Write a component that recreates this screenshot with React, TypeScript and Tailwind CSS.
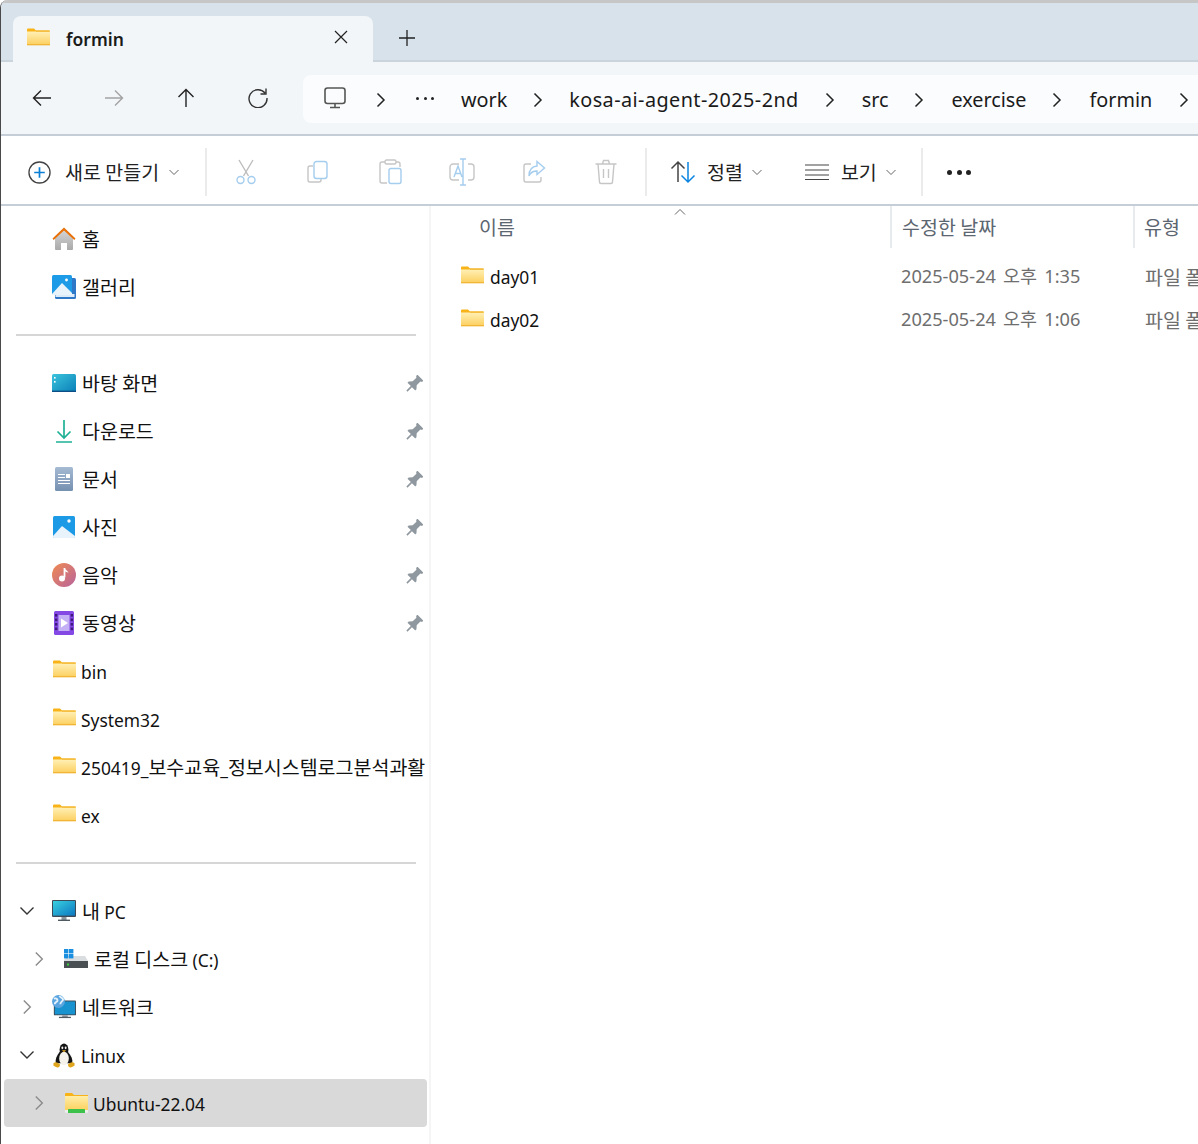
import type { ReactNode } from "react";

const FONT = "font-['Noto_Sans_CJK_KR','Noto_Sans',sans-serif]";

/** Latin runs sit a bit smaller than the hangul next to them, like Segoe beside Malgun. */
function Lat({ children, flush }: { children: ReactNode; flush?: boolean }) {
  return <span className={`font-['Noto_Sans',sans-serif] text-[17.4px] ${flush ? "-ml-px" : ""}`}>{children}</span>;
}

function FolderIcon({ id, className = "" }: { id: string; className?: string }) {
  return (
    <svg viewBox="0 0 24 20" className={`h-5 w-6 ${className}`}>
      <defs>
        <linearGradient id={id} x1="0" y1="0" x2="0" y2="1">
          <stop offset="0" stopColor="#fff0b5" />
          <stop offset="1" stopColor="#fccf5f" />
        </linearGradient>
      </defs>
      <path d="M1 2.500a1 1 0 0 1 1-1h6l2 2h13v2H1z" fill="#f8b318" />
      <rect x="1" y="4.500" width="23" height="13.500" fill={`url(#${id})`} />
      <rect x="1" y="17.200" width="23" height="1.100" fill="#efb02c" />
      <rect x="10" y="3.500" width="14" height="1.200" fill="#f3b733" />
    </svg>
  );
}

function PinIcon() {
  return (
    <svg viewBox="0 0 18 18" className="h-[18px] w-[18px]">
      <path
        transform="rotate(45 9 9)"
        d="M4.800 0h8.400v1.800l-1.400 1v5.200l2.700 3v1.700H9.800V19H8.200v-6.300H3.500V11l2.700-3V2.800l-1.400-1z"
        fill="#8f989f"
      />
    </svg>
  );
}

function Chevron({ open = false, dark = false }: { open?: boolean; dark?: boolean }) {
  return (
    <svg viewBox="0 0 16 16" className="h-4 w-4" fill="none" stroke={dark ? "#333" : "#8b8b8b"} strokeWidth="1.400">
      {open ? <path d="M1.500 4.500 8 11l6.500-6.500" /> : <path d="M4.800 1.500 11.300 8l-6.500 6.500" />}
    </svg>
  );
}

function SmallCaret() {
  return (
    <svg viewBox="0 0 12 12" className="h-3 w-3" fill="none" stroke="#666" strokeWidth="1">
      <path d="M1.500 4 6 8.500 10.500 4" />
    </svg>
  );
}

function PathChevron() {
  return (
    <svg viewBox="0 0 12 16" className="h-4 w-3 shrink-0" fill="none" stroke="#222" strokeWidth="1.500">
      <path d="M2.500 1.500 9 8l-6.500 6.500" />
    </svg>
  );
}

const Home = () => (
  <svg viewBox="0 0 24 24" className="h-6 w-6">
    <defs>
      <linearGradient id="hm" x1="0" y1="0" x2="0" y2="1">
        <stop offset="0" stopColor="#d5d5d5" />
        <stop offset="1" stopColor="#a9a9a9" />
      </linearGradient>
    </defs>
    <path d="M3 11 12 3l9 8v11a1 1 0 0 1-1 1h-5v-7H9v7H4a1 1 0 0 1-1-1z" fill="url(#hm)" />
    <path d="M0.500 11.500 12 0.500l11.500 11-1.200 1.400L12 3.400 1.700 12.900z" fill="#e8710a" />
  </svg>
);

const Gallery = () => (
  <svg viewBox="0 0 24 24" className="h-6 w-6">
    <rect x="3" y="3" width="21" height="21" rx="1.500" fill="#2f78c8" />
    <rect x="3.500" y="19" width="19" height="3" fill="#dcebf7" />
    <rect x="0" y="0" width="20" height="20" rx="1.500" fill="#1d9be6" />
    <path d="M0 19 10 8l10 10v2H0z" fill="#e8f3fb" />
    <circle cx="14.500" cy="5" r="1.400" fill="#fff" />
  </svg>
);

const Desktop = () => (
  <svg viewBox="0 0 24 18" className="h-[18px] w-6">
    <defs>
      <linearGradient id="dk" x1="0" y1="0" x2="1" y2="1">
        <stop offset="0" stopColor="#3bc4dc" />
        <stop offset="1" stopColor="#0a7fb8" />
      </linearGradient>
    </defs>
    <rect width="24" height="18" rx="1.500" fill="url(#dk)" />
    <rect x="2" y="3" width="1.600" height="1.600" fill="#fff" />
    <rect x="2" y="7" width="1.600" height="1.600" fill="#fff" />
    <rect y="16.600" width="24" height="1.400" fill="#0b4f86" />
  </svg>
);

const Download = () => (
  <svg viewBox="0 0 24 24" className="h-6 w-6" fill="none" stroke="#1fb195" strokeWidth="1.700">
    <path d="M12 1v18M5.500 12.500 12 19l6.500-6.500M4 23h16" />
  </svg>
);

const Docs = () => (
  <svg viewBox="0 0 24 24" className="h-6 w-6">
    <defs>
      <linearGradient id="dc" x1="0" y1="0" x2="0" y2="1">
        <stop offset="0" stopColor="#a5bad3" />
        <stop offset="1" stopColor="#7590b0" />
      </linearGradient>
    </defs>
    <rect x="3" y="0" width="18" height="24" rx="1.500" fill="url(#dc)" />
    <path d="M6 7.500h7M6 10.500h7M6 13.500h12M6 16.500h12" stroke="#fff" strokeWidth="1" />
    <rect x="14" y="7" width="4" height="4" fill="#fff" />
  </svg>
);

const Photo = () => (
  <svg viewBox="0 0 24 24" className="h-6 w-6">
    <rect x="1" y="1" width="22" height="22" rx="1.500" fill="#1c9ae6" />
    <path d="M1 21 10 11l13 10v1a1 1 0 0 1-1 1H2a1 1 0 0 1-1-1z" fill="#e8f3fb" />
    <circle cx="17" cy="6" r="1.700" fill="#fff" />
  </svg>
);

const Music = () => (
  <svg viewBox="0 0 24 24" className="h-6 w-6">
    <defs>
      <linearGradient id="ms" x1="0" y1="0" x2="1" y2="1">
        <stop offset="0" stopColor="#f08a50" />
        <stop offset="1" stopColor="#b8649e" />
      </linearGradient>
    </defs>
    <circle cx="12" cy="12" r="12" fill="url(#ms)" />
    <path d="M12.500 5v9.500" stroke="#fff" strokeWidth="1.800" />
    <path d="M12.500 5c.5 2 3.500 2.500 4 5-1.500-1-3-1.500-4-1.500z" fill="#fff" />
    <circle cx="10" cy="15.500" r="3" fill="#fff" />
  </svg>
);

const Video = () => (
  <svg viewBox="0 0 24 24" className="h-6 w-6">
    <rect x="2" y="0" width="20" height="24" rx="1.500" fill="#8448e4" />
    <rect x="6.500" y="4" width="11" height="16" fill="#c3b0f5" />
    <path d="M9 7.500v9l7-4.500z" fill="#fff" />
    {[3, 7.500, 12, 16.500].map((y) => (
      <g key={y} fill="#3d1c7c">
        <rect x="3" y={y} width="2.400" height="2.600" />
        <rect x="18.600" y={y} width="2.400" height="2.600" />
      </g>
    ))}
  </svg>
);

const Pc = () => (
  <svg viewBox="0 0 24 22" className="h-[22px] w-6">
    <defs>
      <linearGradient id="pc" x1="0" y1="0" x2="1" y2="1">
        <stop offset="0" stopColor="#38d0e0" />
        <stop offset="1" stopColor="#0d77c0" />
      </linearGradient>
    </defs>
    <rect x="0" y="0" width="24" height="17" rx="1" fill="#3e4a55" />
    <rect x="1" y="1" width="22" height="14.600" fill="url(#pc)" />
    <rect x="9.500" y="17" width="5" height="3" fill="#8a949c" />
    <rect x="6" y="19.600" width="12" height="1.400" fill="#4f5a62" />
  </svg>
);

const Disk = () => (
  <svg viewBox="0 0 24 20" className="h-5 w-6">
    <path d="M0 11 3 7h18l3 5v3H0z" fill="#d9dde0" />
    <rect y="12" width="24" height="7" fill="#4a4f54" />
    <rect x="3" y="14.500" width="2" height="2" fill="#38d03c" />
    <rect x="0" y="0" width="4.400" height="4.400" fill="#1a8fe0" />
    <rect x="5" y="0" width="4.400" height="4.400" fill="#1a8fe0" />
    <rect x="0" y="5" width="4.400" height="4.400" fill="#1a8fe0" />
    <rect x="5" y="5" width="4.400" height="4.400" fill="#1a8fe0" />
  </svg>
);

const Network = () => (
  <svg viewBox="0 0 26 26" className="h-[26px] w-[26px]">
    <rect x="2" y="6" width="24" height="16" rx="1" fill="#3e4a55" />
    <rect x="3" y="7" width="22" height="14" fill="#1993cf" />
    <rect x="11" y="22" width="6" height="2" fill="#8a949c" />
    <rect x="7.500" y="23.600" width="13" height="1.400" fill="#4f5a62" />
    <circle cx="7" cy="7" r="7" fill="#5aa5e0" />
    <path d="M2 4c2-1 4 0 4 2s-3 1-3 4M8 1c1 2 4 2 4 4s-3 2-3 5" stroke="#e6f2fb" strokeWidth="2" fill="none" />
  </svg>
);

const Tux = () => (
  <svg viewBox="0 0 24 26" className="h-[25px] w-6">
    <ellipse cx="12" cy="7" rx="4.600" ry="6.500" fill="#151515" />
    <path d="M7.500 9c-3 4-5 8-4 12h17c1-4-1-8-4.500-12z" fill="#151515" />
    <ellipse cx="12" cy="16" rx="5" ry="7" fill="#f4f2ea" />
    <ellipse cx="10.300" cy="5" rx="1" ry="1.400" fill="#eee" />
    <ellipse cx="13.700" cy="5" rx="1" ry="1.400" fill="#eee" />
    <path d="M9.800 7.500h4.400L12 9.600z" fill="#e8a920" />
    <path d="M1 21c2-2 5-1 7 1.500l-1 2.500c-2 1-4 0-6-1.500zM23 21c-2-2-5-1-7 1.500l1 2.500c2 1 4 0 6-1.500z" fill="#dfa51c" />
  </svg>
);

const Ubuntu = () => (
  <svg viewBox="0 0 24 22" className="h-[22px] w-6">
    <defs>
      <linearGradient id="ub" x1="0" y1="0" x2="0" y2="1">
        <stop offset="0" stopColor="#ffeda8" />
        <stop offset="1" stopColor="#fcd260" />
      </linearGradient>
    </defs>
    <path d="M1 2a1 1 0 0 1 1-1h6l2 2h14v2H1z" fill="#f8b318" />
    <rect x="1" y="4" width="23" height="14" fill="url(#ub)" />
    <rect x="1" y="18" width="23" height="2.600" fill="#eef0ee" />
    <rect x="4" y="17" width="17" height="4" rx="0.500" fill="#3cc24a" />
  </svg>
);

/* toolbar glyphs: grey body + pale blue accent, both disabled-looking */
const Cut = () => (
  <svg viewBox="0 0 24 26" className="h-[26px] w-6" fill="none" strokeWidth="1.400">
    <path d="M5 1l9.500 16M19 1 9.500 17" stroke="#bdbdbd" />
    <circle cx="6.500" cy="21" r="3.500" stroke="#a5cdee" />
    <circle cx="17.500" cy="21" r="3.500" stroke="#a5cdee" />
  </svg>
);
const CopyIco = () => (
  <svg viewBox="0 0 24 24" className="h-6 w-6" fill="none" strokeWidth="1.400">
    <path d="M7 6H4a2 2 0 0 0-2 2v12a2 2 0 0 0 2 2h9a2 2 0 0 0 2-2v-1" stroke="#c6c6c6" />
    <rect x="8" y="1.500" width="13" height="17" rx="2.500" stroke="#a5cdee" />
  </svg>
);
const Paste = () => (
  <svg viewBox="0 0 24 26" className="h-[26px] w-6" fill="none" strokeWidth="1.400">
    <path d="M7 3H4a2 2 0 0 0-2 2v17a2 2 0 0 0 2 2h5M18 3h2a2 2 0 0 1 2 2v3" stroke="#c6c6c6" />
    <rect x="7" y="1" width="11" height="4" rx="1.500" stroke="#c6c6c6" />
    <rect x="11" y="9.500" width="12" height="15" rx="2" stroke="#a5cdee" />
  </svg>
);
const Rename = () => (
  <svg viewBox="0 0 26 28" className="h-7 w-[26px]" fill="none" strokeWidth="1.400">
    <path d="M10 6H4a3 3 0 0 0-3 3v10a3 3 0 0 0 3 3h6M19 6h3a3 3 0 0 1 3 3v10a3 3 0 0 1-3 3h-3" stroke="#c6c6c6" />
    <path d="M11 1h6M14 1v26M11 27h6M5 19l4-11 4 11M6.500 15.500h5" stroke="#a5cdee" />
  </svg>
);
const Share = () => (
  <svg viewBox="0 0 24 24" className="h-6 w-6" fill="none" strokeWidth="1.400">
    <path d="M9 4H4a2 2 0 0 0-2 2v14a2 2 0 0 0 2 2h13a2 2 0 0 0 2-2v-3" stroke="#c6c6c6" />
    <path d="M15 1.500l7.500 6.500-7.500 6.500V11c-4 0-6.500 1.500-8 5 0-6 3-9.500 8-10z" stroke="#a5cdee" />
  </svg>
);
const Trash = () => (
  <svg viewBox="0 0 24 26" className="h-[26px] w-6" fill="none" stroke="#c6c6c6" strokeWidth="1.400">
    <path d="M1.500 5h21M8.500 5l1-3.500h5l1 3.500M4 5l1.500 18a1.500 1.500 0 0 0 1.500 1.500h10a1.500 1.500 0 0 0 1.500-1.500L20 5M9.500 10v9M14.500 10v9" />
  </svg>
);

function ToolSlot({ children }: { children: ReactNode }) {
  return <div className="flex w-[72px] items-center justify-center">{children}</div>;
}

function Divider() {
  return <div className="h-12 w-0.5 shrink-0 bg-[#ebebeb]" />;
}

function NavRow({
  icon,
  label,
  pinned,
  chevron,
  level = 0,
  selected,
}: {
  icon: ReactNode;
  label: ReactNode;
  pinned?: boolean;
  chevron?: "open" | "closed";
  level?: 0 | 1;
  selected?: boolean;
}) {
  return (
    <div
      className={`ml-[3px] flex h-12 w-[423px] items-center rounded pr-1 ${level === 1 ? "pl-[27px]" : "pl-[15px]"} ${
        selected ? "bg-[#d9d9d9]" : ""
      }`}
    >
      <span className="mr-[17px] flex w-4 shrink-0 justify-center">
        {chevron && <Chevron open={chevron === "open"} dark={chevron === "open"} />}
      </span>
      <span className="mr-[6px] flex w-6 shrink-0 justify-center">{icon}</span>
      <span className="text-[19.500px] whitespace-nowrap text-[#111]">{label}</span>
      {pinned && (
        <span className="mt-0.5 ml-auto shrink-0">
          <PinIcon />
        </span>
      )}
    </div>
  );
}

function NavLine() {
  return (
    <div className="flex h-12 items-center pl-[15px]">
      <div className="h-0.5 w-[400px] bg-[#d6d6d6]" />
    </div>
  );
}

function FileRow({ id, name, day, time }: { id: string; name: string; day: string; time: string }) {
  return (
    <div className="grid h-[43px] grid-cols-[470px_244px_1fr] items-center whitespace-nowrap">
      <div className="flex items-center pl-[29px]">
        <FolderIcon id={id} className="-mt-1" />
        <span className="-mt-0.5 ml-[6px] text-[19.500px] text-[#111]">
          <Lat>{name}</Lat>
        </span>
      </div>
      <span className="text-[18.500px] text-[#6e6e6e]">
        <span className="font-['Noto_Sans',sans-serif] text-[18.200px]">{day}</span>
        <span className="mx-[3px]"> 오후 </span>
        <span className="font-['Noto_Sans',sans-serif] text-[18.200px]">{time}</span>
      </span>
      <span className="text-[19.500px] text-[#6e6e6e]">파일 폴더</span>
    </div>
  );
}

export default function App() {
  return (
    <div className={`flex h-[1144px] w-[1198px] flex-col overflow-hidden rounded-tl-lg border-l border-[#4a4a4a] bg-white ${FONT}`}>
      {/* ── tab strip ──────────────────────────────────────────── */}
      <div className="flex h-[62px] shrink-0 items-end border-t-[3px] border-b-2 border-t-[#c6c6c6] border-b-[#c9d4dc] bg-[#d7e2ea] pl-3">
        <div className="-mb-0.5 flex h-[46px] w-[360px] items-center rounded-t-lg bg-[#f2f6f9] pl-[13px]">
          <FolderIcon id="tab" className="-mt-1" />
          <span className="ml-4 font-['Noto_Sans',sans-serif] text-[17.500px] font-semibold text-[#1a1a1a]">formin</span>
          <svg viewBox="0 0 16 16" className="mt-[-4px] mr-6 ml-auto h-4 w-4" fill="none" stroke="#222" strokeWidth="1.200">
            <path d="M2 2l12 12M14 2 2 14" />
          </svg>
        </div>
        <svg viewBox="0 0 16 16" className="mb-[14px] ml-[26px] h-4 w-4" fill="none" stroke="#222" strokeWidth="1.300">
          <path d="M8 0v16M0 8h16" />
        </svg>
      </div>

      {/* ── navigation + breadcrumb ────────────────────────────── */}
      <div className="flex h-[74px] shrink-0 items-center border-b-2 border-[#c5ced6] bg-[#f2f6f9]">
        <div className="flex w-[302px] shrink-0 pl-[5px]">
          <ToolSlot>
            <svg viewBox="0 0 20 20" className="h-5 w-5" fill="none" stroke="#222" strokeWidth="1.400">
              <path d="M19 10H1.500M9 2.500 1.500 10 9 17.500" />
            </svg>
          </ToolSlot>
          <ToolSlot>
            <svg viewBox="0 0 20 20" className="h-5 w-5" fill="none" stroke="#a3a3a3" strokeWidth="1.400">
              <path d="M1 10h17.500M11 2.500l7.500 7.500-7.500 7.500" />
            </svg>
          </ToolSlot>
          <ToolSlot>
            <svg viewBox="0 0 20 20" className="h-5 w-5" fill="none" stroke="#222" strokeWidth="1.400">
              <path d="M10 19V1.500M2.500 9 10 1.500 17.500 9" />
            </svg>
          </ToolSlot>
          <ToolSlot>
            <svg viewBox="0 0 20 20" className="h-5 w-5" fill="none" stroke="#333" strokeWidth="1.400">
              <path d="M17 5a9 9 0 1 0 2 5M18 .5V6h-5.500" />
            </svg>
          </ToolSlot>
        </div>
        <div className="mt-0.5 flex h-12 flex-1 items-center rounded-l-lg bg-[#fafcfd] pt-[2px] pl-[21px] font-['Noto_Sans',sans-serif] text-[19.800px] whitespace-nowrap text-[#1a1a1a]">
          <svg viewBox="0 0 22 22" className="-mt-1 h-[22px] w-[22px] shrink-0" fill="none" stroke="#555" strokeWidth="1.600">
            <rect x="1" y="1" width="20" height="15.500" rx="2.500" />
            <path d="M11 17v3M6 20.500h10" />
          </svg>
          <span className="ml-[29px]"><PathChevron /></span>
          <span className="-mt-1 ml-[29px] flex w-[18px] shrink-0 justify-between">
            <span className="h-[3px] w-[3px] rounded-full bg-[#222]" />
            <span className="h-[3px] w-[3px] rounded-full bg-[#222]" />
            <span className="h-[3px] w-[3px] rounded-full bg-[#222]" />
          </span>
          <span className="ml-[27px]">work</span>
          <span className="ml-[25px]"><PathChevron /></span>
          <span className="ml-[25px] tracking-[0.45px]">kosa-ai-agent-2025-2nd</span>
          <span className="ml-[25px]"><PathChevron /></span>
          <span className="ml-[26px]">src</span>
          <span className="ml-[25px]"><PathChevron /></span>
          <span className="ml-[26px]">exercise</span>
          <span className="ml-[25px]"><PathChevron /></span>
          <span className="ml-[26px]">formin</span>
          <span className="ml-[26px]"><PathChevron /></span>
        </div>
      </div>

      {/* ── command bar ────────────────────────────────────────── */}
      <div className="flex h-[70px] shrink-0 items-center border-b-2 border-[#c5ced6] pt-1 text-[19.500px] text-[#222]">
        <div className="flex w-[204px] shrink-0 items-center pl-[27px]">
          <svg viewBox="0 0 24 24" className="h-[23px] w-[23px]" fill="none">
            <circle cx="12" cy="12" r="11" stroke="#444" strokeWidth="1.400" />
            <path d="M12 6.500v11M6.500 12h11" stroke="#0a7fd6" strokeWidth="1.800" />
          </svg>
          <span className="ml-[14px] whitespace-nowrap">새로 만들기</span>
          <span className="ml-[9px]"><SmallCaret /></span>
        </div>
        <Divider />
        <div className="flex w-[438px] shrink-0 pl-[3px]">
          <ToolSlot><Cut /></ToolSlot>
          <ToolSlot><CopyIco /></ToolSlot>
          <ToolSlot><Paste /></ToolSlot>
          <ToolSlot><Rename /></ToolSlot>
          <ToolSlot><Share /></ToolSlot>
          <ToolSlot><Trash /></ToolSlot>
        </div>
        <Divider />
        <div className="flex w-[274px] shrink-0 items-center pl-[23px]">
          <svg viewBox="0 0 26 24" className="h-6 w-[26px]" fill="none" strokeWidth="1.500">
            <path d="M8 22V2M1.500 8.500 8 2l6.500 6.500" stroke="#444" />
            <path d="M18 2v20M11.500 15.500 18 22l6.500-6.500" stroke="#0a84e0" />
          </svg>
          <span className="ml-[11px] whitespace-nowrap">정렬</span>
          <span className="ml-2"><SmallCaret /></span>
          <svg viewBox="0 0 26 18" className="ml-[41px] h-[18px] w-[26px]" fill="none" stroke="#444" strokeWidth="1.200">
            <path d="M1 2h24M1 7h24M1 12h24M1 16.500h24" />
          </svg>
          <span className="ml-[11px] whitespace-nowrap">보기</span>
          <span className="ml-2"><SmallCaret /></span>
        </div>
        <Divider />
        <div className="ml-6 flex w-6 justify-between">
          <span className="h-[5px] w-[5px] rounded-full bg-[#222]" />
          <span className="h-[5px] w-[5px] rounded-full bg-[#222]" />
          <span className="h-[5px] w-[5px] rounded-full bg-[#222]" />
        </div>
      </div>

      <div className="flex min-h-0 flex-1">
        {/* ── sidebar ──────────────────────────────────────────── */}
        <div className="w-[430px] shrink-0 border-r-2 border-[#f5f5f5] pt-[9px]">
          <NavRow icon={<Home />} label="홈" />
          <NavRow icon={<Gallery />} label="갤러리" />
          <NavLine />
          <NavRow icon={<Desktop />} label="바탕 화면" pinned />
          <NavRow icon={<Download />} label="다운로드" pinned />
          <NavRow icon={<Docs />} label="문서" pinned />
          <NavRow icon={<Photo />} label="사진" pinned />
          <NavRow icon={<Music />} label="음악" pinned />
          <NavRow icon={<Video />} label="동영상" pinned />
          <NavRow icon={<FolderIcon id="f1" className="-mt-1" />} label={<Lat flush>bin</Lat>} />
          <NavRow icon={<FolderIcon id="f2" className="-mt-1" />} label={<Lat flush>System32</Lat>} />
          <NavRow
            icon={<FolderIcon id="f3" className="-mt-1" />}
            label={
              <>
                <Lat flush>250419_</Lat>보수교육<Lat>_</Lat>정보시스템로그분석과활
              </>
            }
          />
          <NavRow icon={<FolderIcon id="f4" className="-mt-1" />} label={<Lat flush>ex</Lat>} />
          <NavLine />
          <NavRow
            icon={<Pc />}
            label={
              <>
                내 <Lat>PC</Lat>
              </>
            }
            chevron="open"
          />
          <NavRow
            icon={<Disk />}
            label={
              <>
                로컬 디스크 <Lat>(C:)</Lat>
              </>
            }
            chevron="closed"
            level={1}
          />
          <NavRow icon={<Network />} label="네트워크" chevron="closed" />
          <NavRow icon={<Tux />} label={<Lat flush>Linux</Lat>} chevron="open" />
          <NavRow icon={<Ubuntu />} label={<Lat flush>Ubuntu-22.04</Lat>} chevron="closed" level={1} selected />
        </div>

        {/* ── file list ────────────────────────────────────────── */}
        <div className="min-w-0 flex-1 overflow-hidden">
          <div className="grid h-[42px] grid-cols-[459px_243px_1fr] text-[19.500px] whitespace-nowrap text-[#5c6670]">
            <div className="relative flex items-center pl-12">
              이름
              <svg viewBox="0 0 12 7" className="absolute top-0.5 left-[243px] h-[7px] w-3" fill="none" stroke="#666" strokeWidth="1">
                <path d="M1 6.500 6 1.500l5 5" />
              </svg>
            </div>
            <div className="flex items-center border-l-2 border-[#e8ebee] pl-[10px]">수정한 날짜</div>
            <div className="flex items-center border-l-2 border-[#e8ebee] pl-[9px]">유형</div>
          </div>
          <div className="pt-[7px]">
            <FileRow id="d1" name="day01" day="2025-05-24" time="1:35" />
            <FileRow id="d2" name="day02" day="2025-05-24" time="1:06" />
          </div>
        </div>
      </div>
    </div>
  );
}
